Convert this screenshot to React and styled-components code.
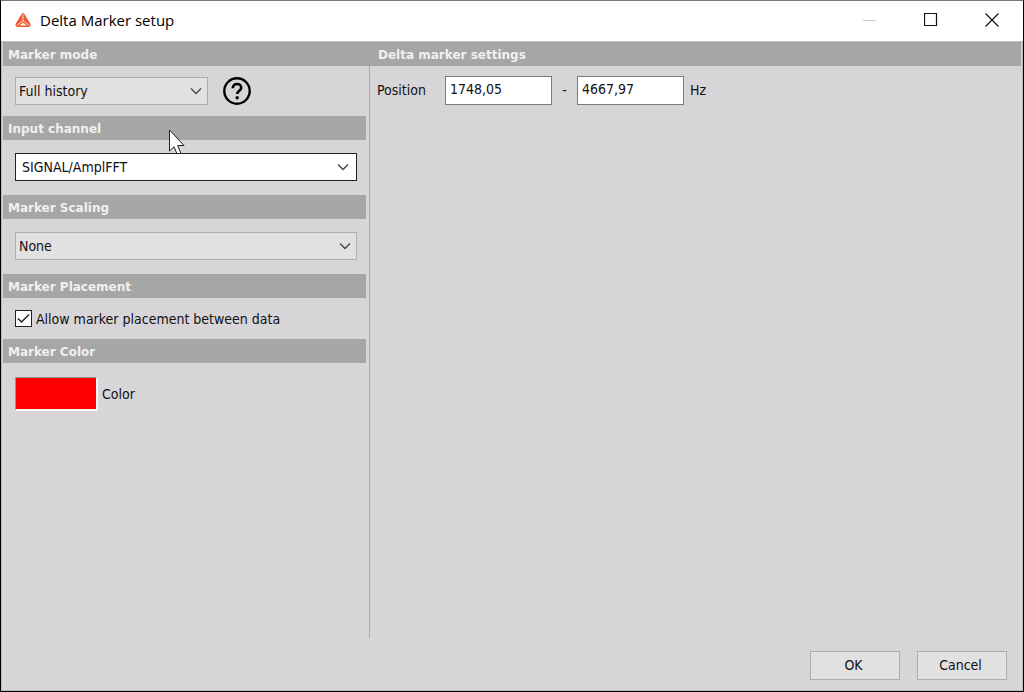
import React from "react";
import styled, { createGlobalStyle } from "styled-components";

const GlobalStyle = createGlobalStyle`
  *, *::before, *::after { box-sizing: border-box; }
  body {
    margin: 0;
    background: #d8d5d8;
    color: #111;
    font-family: Tahoma, "DejaVu Sans Condensed", "Noto Sans", sans-serif;
    font-size: 14px;
    line-height: 20px;
  }
  button, input, select { font: inherit; color: inherit; margin: 0; }
`;

const Window = styled.form`
  display: flex;
  flex-direction: column;
  min-height: 100vh;
  border: 1px solid #000;
  border-top-color: #777;
`;

const TitleBar = styled.header`
  display: flex;
  align-items: center;
  height: 40px;
  padding: 0 1px 2px 13px;
  background: #fff;
`;

const Title = styled.h1`
  flex: 1;
  margin: 0 0 0 8px;
  font: 400 15px/20px "Segoe UI", "Open Sans", sans-serif;
  color: #000;
`;

const CaptionButton = styled.button`
  display: grid;
  place-items: center;
  width: 61px;
  height: 38px;
  padding: 0;
  border: 0;
  background: transparent;
  color: ${(p) => (p.$dim ? "#c8c8c8" : "#111")};
`;

const Client = styled.div`
  flex: 1;
  display: flex;
  flex-direction: column;
  padding: 0 1px;
  border: 1px solid #bcbabc;
`;

const Panes = styled.main`
  flex: 1;
  display: grid;
  grid-template-columns: 367px 1fr;
`;

const Pane = styled.div`
  display: flex;
  flex-direction: column;
`;

const Heading = styled.h2`
  position: relative;
  height: 24px;
  margin: 0;
  padding: 0 ${(p) => (p.$inset || 5)}px;
  background: #a6a6a6;
  color: #f1f0f1;
  font: 700 12px/26px Verdana, "DejaVu Sans", sans-serif;
`;

const Settings = styled.div`
  flex: 1;
  padding-right: 3px;
  border-right: 1px solid #aaa8aa;
`;

const Field = styled.div`
  display: flex;
  align-items: center;
  gap: ${(p) => p.$gap || 0}px;
  height: ${(p) => p.$height}px;
  padding: 0 9px 0 12px;
`;

const WideField = styled(Field)`
  height: 55px;
  padding-bottom: 1px;
`;

const SelectBox = styled.div`
  position: relative;
  z-index: 1;
  width: ${(p) => p.$width || "100%"};
`;

const Select = styled.select`
  display: block;
  width: 100%;
  height: 28px;
  padding: 0 30px 0 ${(p) => (p.$active ? 6 : 3)}px;
  border: 1px solid ${(p) => (p.$active ? "#222" : "#adadad")};
  border-radius: 0;
  appearance: none;
  background: ${(p) => (p.$active ? "#fff" : "#e1e1e1")};
  outline: 0;
`;

const Arrow = styled.svg`
  position: absolute;
  right: ${(p) => (p.$active ? 8 : 6)}px;
  top: 10px;
  pointer-events: none;
`;

const HelpButton = styled.button`
  display: grid;
  width: 28px;
  height: 28px;
  padding: 0;
  border: 0;
  border-radius: 50%;
  background: transparent;
`;

const CheckLabel = styled.label`
  display: flex;
  align-items: center;
  gap: 4px;
`;

const CheckBox = styled.span`
  position: relative;
  width: 17px;
  height: 17px;
`;

const CheckInput = styled.input`
  display: block;
  width: 100%;
  height: 100%;
  appearance: none;
  border: 1px solid #222;
  background: #fff;
  & + svg { position: absolute; inset: 0; pointer-events: none; visibility: hidden; }
  &:checked + svg { visibility: visible; }
`;

const ColorButton = styled.button`
  width: 83px;
  height: 34px;
  padding: 0;
  border: solid;
  border-width: 1px 2px 2px 1px;
  border-color: #999 #f6f4f6 #f6f4f6 #999;
  background: #f00;
`;

const PositionRow = styled.div`
  display: flex;
  align-items: center;
  height: 48px;
  padding-left: 7px;
`;

const PositionLabel = styled.label`
  width: 68px;
`;

const NumberInput = styled.input`
  width: 107px;
  height: 29px;
  padding: 0 4px 2px;
  border: 1px solid #7a7a7a;
  background: #fff;
`;

const Dash = styled.span`
  width: 25px;
  text-align: center;
`;

const Unit = styled.span`
  margin-left: 6px;
`;

const Footer = styled.footer`
  display: flex;
  justify-content: flex-end;
  gap: 17px;
  padding: 13px 14px 10px;
`;

const DialogButton = styled.button`
  width: 90px;
  height: 29px;
  padding: 0 3px 1px 0;
  border: 1px solid #adadad;
  background: #e1e1e1;
`;

const Pointer = styled.svg`
  position: absolute;
  left: 165px;
  top: 13px;
`;

function Logo() {
  return (
    <svg width="18" height="16" viewBox="0 0 18 16" aria-hidden="true">
      <path d="M8 1.500Q9 .5 10 1.500L16.500 12Q17 14.500 14 15H4Q1 14.500 1.500 12Z" fill="#f0592c" />
      <path d="M9 2.500V9L3 13M9 9l6 4" fill="none" stroke="#ffd9cc" strokeWidth="1" />
      <path d="M5 13.500L9 11l4 2.500Z" fill="#fff" />
    </svg>
  );
}

function DropDown({ id, label, value, width, active }) {
  return (
    <SelectBox $width={width}>
      <Select id={id} aria-label={label} $active={active} defaultValue={value}>
        <option>{value}</option>
      </Select>
      <Arrow $active={active} width="12" height="8" viewBox="0 0 12 8" aria-hidden="true">
        <path d="M1 1.500L6 6.500L11 1.500" fill="none" stroke="#444" strokeWidth="1.300" />
      </Arrow>
    </SelectBox>
  );
}

export default function App() {
  return (
    <>
      <GlobalStyle />
      <Window onSubmit={(e) => e.preventDefault()}>
        <TitleBar>
          <Logo />
          <Title>Delta Marker setup</Title>
          <CaptionButton type="button" aria-label="Minimize" $dim>
            <svg width="14" height="14"><path d="M0 7.5H13" stroke="currentColor" /></svg>
          </CaptionButton>
          <CaptionButton type="button" aria-label="Maximize">
            <svg width="14" height="14"><path d="M.5 .5H12.5V12.5H.5Z" fill="none" stroke="currentColor" strokeWidth="1.200" /></svg>
          </CaptionButton>
          <CaptionButton type="button" aria-label="Close">
            <svg width="14" height="14"><path d="M.5 .5L13.5 13.5M13.5 .5L.5 13.5" stroke="currentColor" strokeWidth="1.200" /></svg>
          </CaptionButton>
        </TitleBar>
        <Client>
          <Panes>
            <Pane>
              <Heading>Marker mode</Heading>
              <Settings>
                <Field $height={50} $gap={15}>
                  <DropDown label="Marker mode" value="Full history" width="193px" />
                  <HelpButton type="button" aria-label="Help">
                    <svg width="28" height="28" viewBox="0 0 28 28" fill="none" stroke="#000">
                      <circle cx="14" cy="14" r="12.700" strokeWidth="2.400" />
                      <path d="M9.800 11.200C9.800 8.500 11.600 7 14 7s4.200 1.500 4.200 3.700c0 3-4 3.200-4 6.300" strokeWidth="2.600" />
                      <circle cx="14.200" cy="20.800" r="1.700" fill="#000" stroke="none" />
                    </svg>
                  </HelpButton>
                </Field>
                <Heading>
                  Input channel
                  <Pointer width="18" height="28" viewBox="0 0 18 28" aria-hidden="true">
                    <path d="M1.500 1V22L6 17.800L9.500 26L13 24.500L9.700 16.500H16Z" fill="#fff" stroke="#222" />
                  </Pointer>
                </Heading>
                <WideField>
                  <DropDown label="Input channel" value="SIGNAL/AmplFFT" active />
                </WideField>
                <Heading>Marker Scaling</Heading>
                <WideField>
                  <DropDown label="Marker Scaling" value="None" />
                </WideField>
                <Heading>Marker Placement</Heading>
                <Field $height={41}>
                  <CheckLabel>
                    <CheckBox>
                      <CheckInput type="checkbox" defaultChecked />
                      <svg width="17" height="17" aria-hidden="true">
                        <path d="M3 8.500L6.500 12L14 4.500" fill="none" stroke="#222" strokeWidth="1.500" />
                      </svg>
                    </CheckBox>
                    Allow marker placement between data
                  </CheckLabel>
                </Field>
                <Heading>Marker Color</Heading>
                <Field $height={61} $gap={4}>
                  <ColorButton id="color" type="button" />
                  <label htmlFor="color">Color</label>
                </Field>
              </Settings>
            </Pane>
            <Pane>
              <Heading $inset={8}>Delta marker settings</Heading>
              <PositionRow>
                <PositionLabel htmlFor="from">Position</PositionLabel>
                <NumberInput id="from" defaultValue="1748,05" />
                <Dash>-</Dash>
                <NumberInput aria-label="Position end" defaultValue="4667,97" />
                <Unit>Hz</Unit>
              </PositionRow>
            </Pane>
          </Panes>
          <Footer>
            <DialogButton type="submit">OK</DialogButton>
            <DialogButton type="button">Cancel</DialogButton>
          </Footer>
        </Client>
      </Window>
    </>
  );
}
